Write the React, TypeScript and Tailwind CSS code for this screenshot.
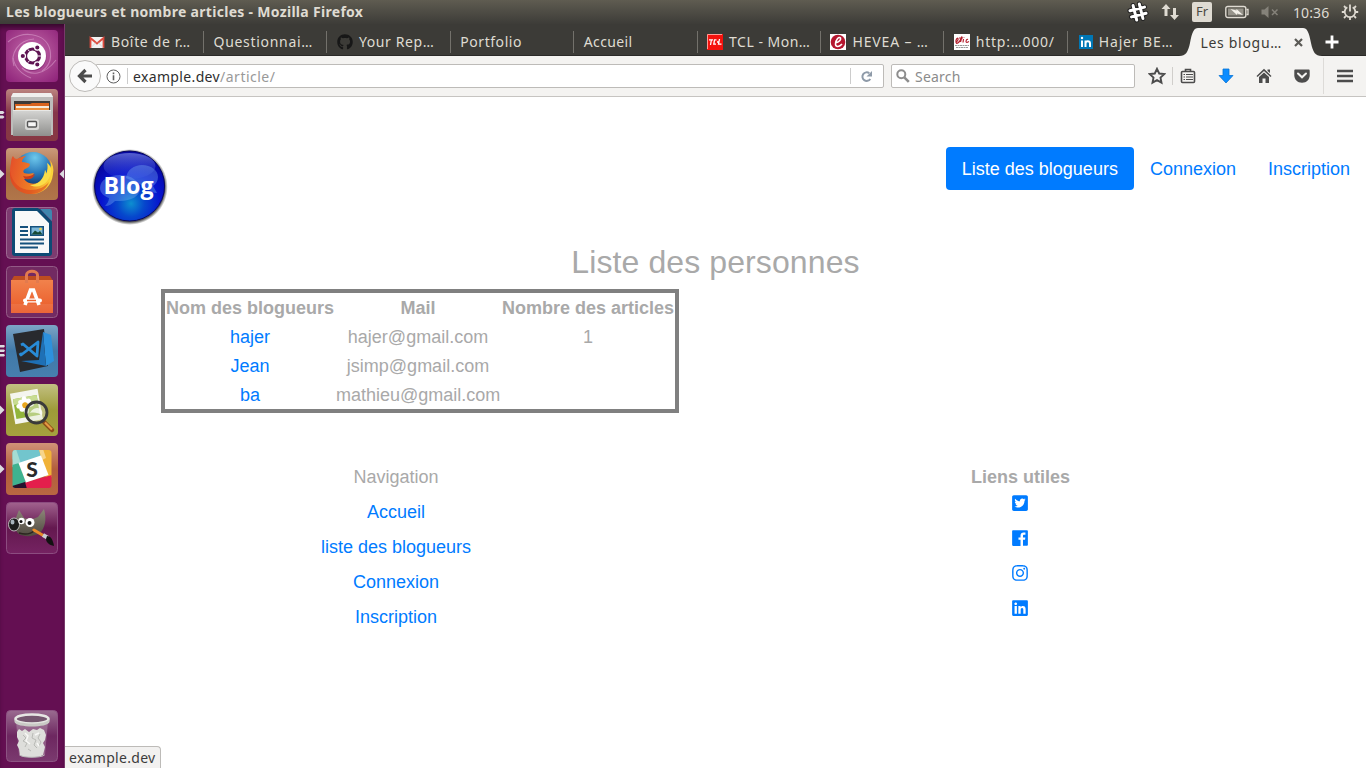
import React from "react";
import { FaTwitterSquare, FaInstagram, FaLinkedin, FaGithub } from "react-icons/fa";

const FacebookIcon = () => (
  <svg viewBox="0 0 448 512" className="h-[18px] w-[16px]" fill="currentColor">
    <path d="M448 56.7v398.5c0 13.7-11.1 24.7-24.7 24.7H309.1V306.5h58.2l8.7-67.6h-67v-43.2c0-19.6 5.4-32.9 33.5-32.9h35.8v-60.5c-6.2-.8-27.4-2.7-52.2-2.7-51.6 0-87 31.5-87 89.4v49.9h-58.4v67.6h58.4V480H24.7C11.1 480 0 468.9 0 455.3V56.7C0 43.1 11.1 32 24.7 32h398.5c13.7 0 24.8 11.1 24.8 24.7z" />
  </svg>
);

/* ---------- launcher artwork ---------- */

const UbuntuArt = () => (
  <>
    <defs>
      <radialGradient id="ub" cx=".5" cy=".45" r=".75">
        <stop offset="0" stopColor="#c56db0" />
        <stop offset=".55" stopColor="#a6438e" />
        <stop offset="1" stopColor="#8c1f78" />
      </radialGradient>
    </defs>
    <rect width="52" height="52" rx="4" fill="url(#ub)" />
    <g fill="none" stroke="#e3acd6" strokeWidth="1.1" opacity=".5">
      <path d="M2 12C14 0 40 2 44 20c2 10-2 17-8 21" />
      <path d="M8 36C4 24 12 10 28 9" />
      <path d="M16 38c8 8 22 8 34-8" />
      <path d="M7 28c2 10 8 16 18 20" />
    </g>
    <circle cx="26.500" cy="27" r="14" fill="#6d1660" opacity=".45" />
    <circle cx="26" cy="26" r="14" fill="#fff" />
    <circle cx="26.500" cy="26" r="7" fill="none" stroke="#5e1352" strokeWidth="3.200" />
    <g stroke="#fff" strokeWidth="1.2" fill="#5e1352">
      <circle cx="16.800" cy="26" r="2.700" />
      <circle cx="31.300" cy="17.500" r="2.700" />
      <circle cx="31.300" cy="34.500" r="2.700" />
    </g>
    <path d="M32 26h3M22 19.500l1.500 2M22 32.500l1.500-2" stroke="#fff" strokeWidth="1" />
  </>
);

const FilesArt = () => (
  <>
    <defs>
      <linearGradient id="fl" x2="0" y2="1">
        <stop offset="0" stopColor="#bc8580" />
        <stop offset=".45" stopColor="#86364a" />
        <stop offset="1" stopColor="#873843" />
      </linearGradient>
      <linearGradient id="fg" x2="0" y2="1">
        <stop offset="0" stopColor="#d5d5d3" />
        <stop offset="1" stopColor="#8f8f8d" />
      </linearGradient>
    </defs>
    <rect width="52" height="52" rx="4" fill="url(#fl)" />
    <path d="M7 4h38l2 4v38H5V8z" fill="#bdbdbb" />
    <path d="M7 4h38l2 4H5z" fill="#f0f0ee" />
    <path d="M8 12h36v10H8z" fill="#3d3a37" />
    <path d="M9 15h15l2-1h17v8H9z" fill="#d9631e" />
    <path d="M10 17h33v5H10z" fill="#f7ead9" />
    <path d="M10 19h33v3H10z" fill="#ec913f" />
    <path d="M7 21h38v26H7z" fill="url(#fg)" />
    <path d="M7 21.500h38" stroke="#e8e8e6" />
    <rect x="19" y="30" width="14" height="11" rx="2.500" fill="#d9d9d7" />
    <rect x="21.500" y="32.500" width="9" height="5.500" rx="1" fill="#f6f6f6" stroke="#555" strokeWidth="1.400" />
  </>
);

const FirefoxArt = () => (
  <>
    <defs>
      <linearGradient id="ffb" x2="0" y2="1">
        <stop offset="0" stopColor="#ca9a7b" />
        <stop offset=".5" stopColor="#a96941" />
        <stop offset="1" stopColor="#b0764a" />
      </linearGradient>
      <radialGradient id="ffg" cx=".55" cy=".15" r=".7">
        <stop offset="0" stopColor="#6ec8ec" />
        <stop offset=".6" stopColor="#2877b8" />
        <stop offset="1" stopColor="#154179" />
      </radialGradient>
      <linearGradient id="fff" x1="0" y1=".2" x2="1" y2=".4">
        <stop offset="0" stopColor="#e4502a" />
        <stop offset=".6" stopColor="#f08124" />
        <stop offset="1" stopColor="#fbd83a" />
      </linearGradient>
    </defs>
    <rect width="52" height="52" rx="4" fill="url(#ffb)" />
    <circle cx="27" cy="23" r="19" fill="url(#ffg)" />
    <path d="M5 15c0-3 1-6 2-7 1 2 2 3 4 3 3-2 6-3 9-3-3 2-4 4-4 6 3 0 6 1 8 2 0 2-2 4-5 5-2 1-2 3-1 4 3 1 6 1 10 0-2 4-6 6-10 6 4 6 13 6 18 1 4-4 6-9 6-15 1 2 2 3 2 5 1-3 1-7 0-10 3 4 4 9 3 14-1 12-10 20-21 20C13 46 4 38 4 26c0-4 0-7 1-11z" fill="url(#fff)" />
    <path d="M41 15c1 3 1 8-1 11 0-2 0-3-1-4-1 9-7 15-15 15 10 5 20-3 21-13 1-4-1-7-4-9z" fill="#fbdd48" />
    <path d="M4 23c2 12 10 19 21 19 7 0 14-3 18-8-3 8-10 12-18 12C13 46 4 38 4 26z" fill="#d9421f" opacity=".6" />
    <path d="M17 28c4 1 8 0 12-2-2 5-6 6-10 5z" fill="#c73d1d" />
  </>
);

const WriterArt = () => (
  <>
    <rect x=".5" y=".5" width="51" height="51" rx="4" fill="#7d3b70" stroke="#9d6891" />
    <path d="M6 4c0-2 1-3 3-3h23l14 14v31c0 2-1 3-3 3H9c-2 0-3-1-3-3z" fill="#0d4a74" />
    <path d="M9 4h22l12 12v30H9z" fill="#f8f9f9" />
    <path d="M34 2h10c1 0 2 1 2 3v9z" fill="#3f86ae" />
    <path d="M30 2l16 17v-4L34 2z" fill="#0d4a74" />
    <path d="M14 20h8M14 24h8M14 28h8M14 32.500h24M14 36.500h24M14 40.500h18" stroke="#15517c" strokeWidth="2" />
    <rect x="24" y="19" width="14" height="10" fill="#15517c" />
    <rect x="25.500" y="20.500" width="11" height="7" fill="#7db8d8" />
    <path d="M25.500 27.500l3.500-4 3 2 2-1.500 2.500 3.500z" fill="#174a35" />
    <circle cx="34.500" cy="22" r="1.300" fill="#f4d24a" />
  </>
);

const SoftwareArt = () => (
  <>
    <defs>
      <linearGradient id="sw" x2="0" y2="1">
        <stop offset="0" stopColor="#f1824c" />
        <stop offset="1" stopColor="#ea5a28" />
      </linearGradient>
    </defs>
    <rect x=".5" y=".5" width="51" height="51" rx="4" fill="#722a62" stroke="#935a86" />
    <path d="M5 15l3-5h36l3 5z" fill="#bd4c20" />
    <path d="M5 14h42v33H5z" fill="url(#sw)" />
    <path d="M20.500 17V9c0-5 11-5 11 0v8" fill="none" stroke="#e27a4e" strokeWidth="3" />
    <path d="M5 38h42v9H5z" fill="#fff" opacity=".08" />
    <path d="M19 39l5.500-15h3L33 39" fill="none" stroke="#fff" strokeWidth="3.600" />
    <path d="M19 34.500h15" stroke="#fff" strokeWidth="4" strokeLinecap="round" />
    <path d="M21 34.500h9" stroke="#ed6430" strokeWidth="1.500" />
  </>
);

const CodeArt = () => (
  <>
    <defs>
      <linearGradient id="vc" x2="0" y2="1">
        <stop offset="0" stopColor="#7da5c6" />
        <stop offset=".5" stopColor="#4079a8" />
        <stop offset="1" stopColor="#477fae" />
      </linearGradient>
    </defs>
    <rect width="52" height="52" rx="4" fill="url(#vc)" />
    <path d="M7 9l31-5 4 37-28 6z" fill="#282a2e" />
    <path d="M37 7l8 3 3 26-8 5z" fill="#2d91dd" />
    <path d="M37 7l3 34-25-5 18-1z" fill="#1e70b6" />
    <path d="M15 20l2-1 14 12 1-14-17 13-1-2" fill="none" stroke="#288bd7" strokeWidth="2.800" strokeLinejoin="round" />
  </>
);

const ViewerArt = () => (
  <>
    <defs>
      <linearGradient id="vw" x2="0" y2="1">
        <stop offset="0" stopColor="#c2c082" />
        <stop offset=".5" stopColor="#9e9b38" />
        <stop offset="1" stopColor="#a5a13e" />
      </linearGradient>
    </defs>
    <rect width="52" height="52" rx="4" fill="url(#vw)" />
    <g transform="rotate(-10 20 20)">
      <rect x="6" y="7" width="28" height="31" fill="#f4f5ee" />
      <rect x="8" y="13" width="24" height="20" fill="#92b53c" />
      <rect x="8" y="13" width="24" height="6" fill="#c8dc92" />
      <g fill="#fff">
        <ellipse cx="19" cy="16" rx="2.500" ry="4" />
        <ellipse cx="19" cy="26" rx="2.500" ry="4" />
        <ellipse cx="14" cy="21" rx="4" ry="2.500" />
        <ellipse cx="24" cy="21" rx="4" ry="2.500" />
        <ellipse cx="15.500" cy="17.500" rx="3" ry="2.500" />
        <ellipse cx="22.500" cy="17.500" rx="3" ry="2.500" />
        <ellipse cx="15.500" cy="24.500" rx="3" ry="2.500" />
      </g>
      <circle cx="19" cy="21" r="3" fill="#e9a71f" />
    </g>
    <path d="M38 38l8 8" stroke="#8c4c16" strokeWidth="4.500" strokeLinecap="round" />
    <path d="M39 38.500l7 7" stroke="#e59a45" strokeWidth="2.200" />
    <circle cx="30.500" cy="28.500" r="10.500" fill="#e5ead2" fillOpacity=".45" stroke="#3a3a3a" strokeWidth="2.800" />
    <path d="M24 29c2-4 5-5 8-5 4 1 5 4 4 7-3-2-8-3-12-2z" fill="#fff" opacity=".75" />
  </>
);

const SlackArt = () => (
  <>
    <defs>
      <linearGradient id="sl" x2="0" y2="1">
        <stop offset="0" stopColor="#d19278" />
        <stop offset=".5" stopColor="#b25e3c" />
        <stop offset="1" stopColor="#b96742" />
      </linearGradient>
      <clipPath id="slc">
        <rect x="6.500" y="7" width="39" height="38" rx="3" />
      </clipPath>
    </defs>
    <rect width="52" height="52" rx="4" fill="url(#sl)" />
    <g clipPath="url(#slc)">
      <path d="M6 6h30v8L12 22 6 16z" fill="#72c5cd" />
      <path d="M6 6h4l5 15-9 3z" fill="#a5ddd4" />
      <path d="M33 6h13v28l-6 2z" fill="#f0b238" />
      <path d="M33 6h4l3 9-4 2z" fill="#f7d58b" />
      <path d="M6 22l7-2 8 22-15 4z" fill="#3fb28f" />
      <path d="M17 40l29-8v14H17z" fill="#e41e4c" />
      <path d="M6 43l13-4 2 7H6z" fill="#28122d" />
      <path d="M12.500 20L35 12.500 42.500 32 20 39.500z" fill="#fff" />
    </g>
    <text x="26" y="34" textAnchor="middle" fontFamily="Lato, sans-serif" fontWeight="900" fontSize="21" fill="#2b2b2b">S</text>
  </>
);

const GimpArt = () => (
  <>
    <defs>
      <linearGradient id="gm" x2="0" y2="1">
        <stop offset="0" stopColor="#a1628e" />
        <stop offset=".5" stopColor="#64184f" />
        <stop offset="1" stopColor="#752362" />
      </linearGradient>
      <linearGradient id="gf" x2="0" y2="1">
        <stop offset="0" stopColor="#8d8678" />
        <stop offset="1" stopColor="#4f4a40" />
      </linearGradient>
    </defs>
    <rect x=".5" y=".5" width="51" height="51" rx="4" fill="url(#gm)" stroke="#8c4c80" />
    <path d="M9 18l4-10 5 8c5 2 10 1 14-1l6-8c3 10 1 19-4 24-7 4-16 4-21 1-4-3-5-9-4-14z" fill="url(#gf)" />
    <ellipse cx="8" cy="22.500" rx="5.500" ry="6.500" fill="#1c1c1c" stroke="#d8d8d8" strokeWidth=".8" />
    <ellipse cx="6.500" cy="20" rx="2" ry="2.500" fill="#a8b4bd" />
    <circle cx="15.500" cy="19" r="3.200" fill="#fff" />
    <circle cx="24" cy="20.500" r="4.500" fill="#fff" />
    <circle cx="15" cy="19.500" r="1.500" fill="#111" />
    <circle cx="23.500" cy="21" r="2" fill="#111" />
    <path d="M13 31c6 2 12 1 16-3" fill="none" stroke="#2a261f" strokeWidth="1.500" />
    <path d="M28 28l10 6" stroke="#e98b2a" strokeWidth="3" strokeLinecap="round" />
    <path d="M37 33l5 3" stroke="#c9ced2" strokeWidth="4" />
    <path d="M41 34c4 0 6 4 7 10-5-1-8-4-8-7z" fill="#121212" />
  </>
);

const TrashArt = () => (
  <>
    <defs>
      <linearGradient id="tr" x2="0" y2="1">
        <stop offset="0" stopColor="#9a6b90" />
        <stop offset=".5" stopColor="#6d2760" />
        <stop offset="1" stopColor="#7b3a6f" />
      </linearGradient>
    </defs>
    <rect x=".5" y=".5" width="51" height="51" rx="4" fill="url(#tr)" stroke="#8c5382" />
    <path d="M10 11l3 34c2 3 24 3 26 0l3-34z" fill="#d7c9d5" opacity=".3" />
    <path d="M11 22l2-3 3 2 3-2 4 3 4-3 4 1 3-2 4 2 2 5-1 5-2 3 2 4-2 8c-5 3-19 3-23 0l-1-6-2-4 2-4-2-4z" fill="#dededb" />
    <path d="M17 25l3 3-3 3 4 2-2 4M27 23l-1 5 4 2-2 5 3 3M34 24l-2 4 3 4-2 4M22 39l3 2" stroke="#b9bab6" strokeWidth="1" fill="none" />
    <path d="M19 23l3 3-2 5 4 3M29 25l4-2M31 33l2 3" stroke="#f8f8f6" strokeWidth="1.400" fill="none" />
    <ellipse cx="26" cy="9" rx="16.500" ry="4.500" fill="#75576f" stroke="#e6e6e3" strokeWidth="2.600" />
    <path d="M8.500 9v3c2 6 33 6 35 0V9c-2 6-33 6-35 0z" fill="#c9c9c5" />
    <path d="M13.500 45c3 3 22 3 25 0" stroke="#bbb" strokeWidth="1" fill="none" />
  </>
);

type Item = { art: () => React.JSX.Element; marks?: number; focused?: boolean };
const launcher: Item[] = [
  { art: UbuntuArt },
  { art: FilesArt, marks: 2 },
  { art: FirefoxArt, marks: 1, focused: true },
  { art: WriterArt },
  { art: SoftwareArt },
  { art: CodeArt, marks: 3 },
  { art: ViewerArt, marks: 1 },
  { art: SlackArt, marks: 1 },
  { art: GimpArt },
];

const Tile = ({ art: Art, marks = 0, focused }: Item) => (
  <div className="flex h-[52px] w-full items-center">
    <svg className="h-[12px] w-[6px] shrink-0" viewBox="0 0 6 12" fill="#dcdce0">
      {marks === 1 && <path d="M0 1.500v9L4.500 6z" />}
      {marks === 2 && <path d="M0 2h3l1.500 1.500L3 5H0zM0 6.500h3L4.500 8 3 9.500H0z" />}
      {marks === 3 && <path d="M0 0h4l1 1-1 1.500H0zM0 4.500h4l1 1L4 7H0zM0 9h4l1 1.200L4 11.500H0z" />}
    </svg>
    <svg className="h-[52px] w-[52px] shrink-0" viewBox="0 0 52 52"><Art /></svg>
    {focused && (
      <svg className="ml-[1px] h-[10px] w-[5px]" viewBox="0 0 5 10" fill="#dcdce0"><path d="M5 .5v9L.5 5z" /></svg>
    )}
  </div>
);

/* ---------- tab favicons ---------- */

const Gmail = () => (
  <svg className="h-4 w-[22px] shrink-0 pr-[6px]" viewBox="0 0 16 16">
    <rect x="1" y="3" width="14" height="11" rx="1" fill="#f2f2f2" />
    <path d="M1.500 14V4l6.500 5.500L14.500 4v10" fill="none" stroke="#dd4b3e" strokeWidth="1.800" />
    <path d="M2 13.500l5-5M14 13.500l-5-5" stroke="#ccc" strokeWidth=".7" />
  </svg>
);
const Tcl = () => (
  <svg className="h-4 w-[22px] shrink-0 pr-[6px]" viewBox="0 0 16 16">
    <rect width="16" height="16" fill="#f5120d" />
    <path d="M.5 15V.5H15" stroke="#ff9b95" fill="none" />
    <path d="M2 5.800h4M4.500 5.500L3.500 11M9.500 5.800H7.500L6.800 10.200h2.200M12.500 5L11.500 10.200h3M10 8h2" stroke="#fff" strokeWidth="1.300" fill="none" />
  </svg>
);
const Hevea = () => (
  <svg className="h-4 w-[22px] shrink-0 pr-[6px]" viewBox="0 0 16 16">
    <rect width="16" height="16" fill="#fff" />
    <circle cx="8" cy="8" r="7.300" fill="#b5162f" />
    <path d="M5 9c4-1 6-3 5.500-5C9 2 5.500 6 5.500 10c0 3.500 4 3 6.500 0" fill="none" stroke="#fff" strokeWidth="1.600" />
  </svg>
);
const Clic = () => (
  <svg className="h-4 w-[22px] shrink-0 pr-[6px]" viewBox="0 0 16 16">
    <rect width="16" height="16" fill="#fff" />
    <path d="M1.500 8.500c2-1 3-3 2.500-4s-2.500 1-2 3.500 2 1 3.500-.5L8 2.500 6.500 8M5 4h4M9.500 5L9 8.500M10 3v.5M14 5.500c-1.500-1-3 3-1 3l2-1" fill="none" stroke="#b3202e" strokeWidth="1.200" />
    <path d="M1 11.500h14M2 13.500h12" stroke="#999" strokeWidth="1" strokeDasharray="2 .5" />
  </svg>
);
const LinkedinFav = () => (
  <svg className="h-4 w-[21px] shrink-0 pr-[5px]" viewBox="0 0 16 16">
    <rect x="1" y="1" width="14" height="14" fill="#0077b5" />
    <path d="M4 6.500V13M7.500 6.500V13M7.500 9.500c0-3 4.500-3 4.500 0V13" stroke="#fff" strokeWidth="2" fill="none" />
    <circle cx="4" cy="4" r="1.200" fill="#fff" />
  </svg>
);
const Github = () => <FaGithub className="mr-[6px] h-4 w-4 shrink-0 text-[#171717]" />;

const tabs: { label: string; icon?: () => React.JSX.Element; ls: string }[] = [
  { label: "Boîte de r…", icon: Gmail, ls: "tracking-[0.65px]" },
  { label: "Questionnai…", ls: "tracking-[0.7px]" },
  { label: "Your Rep…", icon: Github, ls: "tracking-[0.6px]" },
  { label: "Portfolio", ls: "tracking-[0.55px]" },
  { label: "Accueil", ls: "tracking-[0.4px]" },
  { label: "TCL - Mon…", icon: Tcl, ls: "tracking-[0.5px]" },
  { label: "HEVEA – …", icon: Hevea, ls: "tracking-[0.85px]" },
  { label: "http:…000/", icon: Clic, ls: "tracking-[0.75px]" },
  { label: "Hajer BE…", icon: LinkedinFav, ls: "tracking-[0.85px]" },
];

const TitleBar = () => (
  <header className="flex h-6 shrink-0 items-center bg-linear-to-b from-[#5f5c51] to-[#3d3c38] pl-[6px] text-[#dfdbd2]">
    <h1 className="w-[1121px] whitespace-nowrap text-[14px] font-bold leading-6 tracking-[0.3px]">Les blogueurs et nombre articles - Mozilla Firefox</h1>
    <svg className="h-[22px] w-[22px] shrink-0" viewBox="0 0 22 22">
      <g transform="rotate(-14 11 11)">
        <path d="M7.800 3.500v15M14.200 3.500v15M3.500 7.800h15M3.500 14.200h15" stroke="#222" strokeWidth="5" strokeLinecap="round" />
        <path d="M7.800 3.500v15M14.200 3.500v15M3.500 7.800h15M3.500 14.200h15" stroke="#fff" strokeWidth="3" strokeLinecap="round" />
      </g>
    </svg>
    <svg className="ml-[12px] h-[18px] w-[19px] shrink-0" viewBox="0 0 19 18" fill="#dfdbd2">
      <path d="M5 1l4.500 5H6.500v7h-3V6H.5zM13.500 17L9 12h3V5h3v7h3z" />
    </svg>
    <div className="ml-[12px] flex h-5 w-5 shrink-0 items-center justify-center rounded-[2px] bg-[#dfdbd2] text-[13px] text-[#4a4842]">Fr</div>
    <svg className="ml-[13px] h-[14px] w-[24px] shrink-0" viewBox="0 0 24 14">
      <rect x=".8" y="1.500" width="20" height="11" rx="2" fill="none" stroke="#dfdbd2" strokeWidth="1.400" />
      <rect x="3" y="3.500" width="15.500" height="7" fill="#96938a" />
      <path d="M21.500 4.500H23v5h-1.500" fill="none" stroke="#dfdbd2" strokeWidth="1.300" />
      <path d="M5.500 4l6 1.500V4l6.500 6-6-1.500V10z" fill="#f2efe8" />
    </svg>
    <svg className="ml-[11px] h-4 w-5 shrink-0" viewBox="0 0 20 16">
      <path d="M1.500 5.500h3L8.500 2v12l-4-3.500h-3z" fill="#85827a" />
      <path d="M12 5.500l5.500 5.500M17.500 5.500L12 11" stroke="#85827a" strokeWidth="1.500" />
    </svg>
    <time className="ml-[13px] w-[37px] shrink-0 whitespace-nowrap text-[14px] tracking-[0.1px]">10:36</time>
    <svg className="ml-[11px] h-[18px] w-[18px] shrink-0" viewBox="0 0 18 18" fill="none" stroke="#dfdbd2">
      <path d="M6.300 4.300a5.300 5.300 0 1 0 5.400 0" strokeWidth="1.800" />
      <path d="M9 1.500v7" strokeWidth="1.800" />
      <path d="M3 3l1.800 1.800M13.200 4.800L15 3M.8 9h3M14.200 9h3M3 15l1.800-1.800M15 15l-1.800-1.800M9 14v3" strokeWidth="1.800" />
    </svg>
  </header>
);

const TabStrip = () => (
  <div className="flex h-8 shrink-0 items-center border-b border-[#2b2a28] bg-[#3c3b37] pl-[15px] pt-[4px] text-[14px] text-[#dfdbd2]">
    {tabs.map((t, i) => (
      <div key={t.label} className={`flex h-[22px] shrink-0 items-center whitespace-nowrap ${i === 0 ? "w-[124px] border-r border-[#73716b] pl-[9px]" : i === 8 ? "w-[115.7px] pl-[10px]" : "w-[123.4px] border-r border-[#73716b] pl-[9.5px]"}`}>
        {t.icon && <t.icon />}
        <span className={t.ls}>{t.label}</span>
      </div>
    ))}
    <div className="-mb-px -ml-[4px] flex h-[28px] shrink-0 items-end self-end">
      <svg className="h-[28px] w-[19px] shrink-0" viewBox="0 0 19 28"><path d="M0 28c7 0 9-4 11-13 2-11 4-15 8-15v28z" fill="#f4f3f1" /></svg>
      <div className="flex h-[28px] w-[105px] items-center bg-[#f4f3f1] pl-[2px] text-[#3c3b37]">
        <span className="w-[95px] whitespace-nowrap tracking-[0.7px]">Les blogu…</span>
        <svg className="h-[9px] w-[9px] shrink-0" viewBox="0 0 9 9"><path d="M1 1l7 7M8 1L1 8" stroke="#5b5a56" strokeWidth="2.200" /></svg>
      </div>
      <svg className="h-[28px] w-[19px] shrink-0" viewBox="0 0 19 28"><path d="M19 28C12 28 10 24 8 15 6 4 4 0 0 0v28z" fill="#f4f3f1" /></svg>
    </div>
    <svg className="ml-[3px] h-[14px] w-[14px] shrink-0" viewBox="0 0 14 14"><path d="M7 .5v13M.5 7h13" stroke="#fff" strokeWidth="2.800" /></svg>
  </div>
);

const Toolbar = () => (
  <div className="flex h-[41px] shrink-0 items-center border-b border-[#c6c4c1] bg-[#f4f3f1] pl-1">
    <div className="z-10 flex h-8 w-8 shrink-0 items-center justify-center rounded-full border border-[#bdbbb8] bg-[#fafafa]">
      <svg className="h-4 w-4" viewBox="0 0 16 16"><path d="M8.500 2L2.500 8l6 6M3 8h12" stroke="#4c4c4c" strokeWidth="3.200" fill="none" /></svg>
    </div>
    <div className="-ml-[5px] flex h-6 w-[788px] shrink-0 items-center rounded-r-[2px] border border-[#bdbbb8] bg-white pl-[9px]">
      <svg className="h-[15px] w-[15px] shrink-0" viewBox="0 0 15 15">
        <circle cx="7.500" cy="7.500" r="6.500" fill="none" stroke="#5f5f5f" />
        <path d="M7.500 6.300V11.300M7.500 3.500v1.700" stroke="#5f5f5f" strokeWidth="1.600" />
      </svg>
      <div className="ml-[6px] h-4 w-px bg-[#ccc]" />
      <span className="ml-[5px] w-[717px] whitespace-nowrap text-[14px] tracking-[0.35px] text-[#2e2e2e]">example.dev<span className="tracking-[0.5px] text-[#999]">/article/</span></span>
      <div className="h-4 w-px bg-[#ccc]" />
      <svg className="ml-[9px] h-[13px] w-[13px]" viewBox="0 0 13 13">
        <path d="M9.300 3.200A4.300 4.300 0 1 0 10.300 9" fill="none" stroke="#8e9aa8" strokeWidth="2" />
        <path d="M12 1v5.500H6.500z" fill="#8e9aa8" />
      </svg>
    </div>
    <div className="ml-[7px] flex h-6 w-[244px] shrink-0 items-center rounded-[2px] border border-[#bdbbb8] bg-white pl-1">
      <svg className="h-[14px] w-[14px]" viewBox="0 0 14 14"><circle cx="5.300" cy="5.300" r="4" fill="none" stroke="#8d8d8d" strokeWidth="2" /><path d="M8.300 8.300l4.500 4.500" stroke="#8d8d8d" strokeWidth="2.600" /></svg>
      <span className="ml-[5px] text-[14px] tracking-[0.2px] text-[#8b8b8b]">Search</span>
    </div>
    <svg className="ml-[13px] h-[18px] w-[18px] shrink-0" viewBox="0 0 18 18"><path d="M9 1.800l2.200 4.700 5.100.6-3.800 3.500 1 5.100L9 13.200l-4.500 2.500 1-5.100L1.700 7.100l5.100-.6z" fill="none" stroke="#4c4c4c" strokeWidth="1.900" /></svg>
    <div className="ml-[6px] h-[18px] w-px shrink-0 bg-[#d0cecb]" />
    <svg className="ml-[7px] h-4 w-4 shrink-0" viewBox="0 0 16 16" fill="none" stroke="#4c4c4c">
      <rect x="1.500" y="3.500" width="13" height="11" rx="1" strokeWidth="1.600" />
      <path d="M5.500 3.500V1.500h5v2" strokeWidth="1.600" />
      <path d="M3.500 6.500h1.500M3.500 9h1.500M3.500 11.500h1.500M6 6.500h7M6 9h7M6 11.500h7" strokeWidth="1" />
    </svg>
    <svg className="ml-[22px] h-4 w-4 shrink-0" viewBox="0 0 16 16"><path d="M5 1h6v6.500h4L8 15 1 7.500h4z" fill="#0b8cff" stroke="#0973d6" strokeWidth=".8" /></svg>
    <svg className="ml-[22px] h-4 w-4 shrink-0" viewBox="0 0 16 16" fill="#4c4c4c"><path d="M8 .8l7.500 7.200-1 1L8 3 1.500 9l-1-1zM11.500 1.500H14V5l-2.500-2zM3 9l5-4.500L13 9v6H9.500v-4.500h-3V15H3z" /></svg>
    <svg className="ml-[22px] h-4 w-4 shrink-0" viewBox="0 0 16 16"><path d="M1.500 1.500h13c.8 0 1.200.5 1.200 1.200v4.500c0 4-3 7.500-7.700 7.500S.3 11.200.3 7.200V2.700c0-.7.4-1.200 1.200-1.200z" fill="#4c4c4c" /><path d="M4 5.500l4 3.800 4-3.800" stroke="#f4f3f1" strokeWidth="2" fill="none" strokeLinecap="round" /></svg>
    <div className="ml-[13px] h-9 w-px shrink-0 bg-[#dddbd8]" />
    <svg className="ml-[13px] h-[14px] w-4 shrink-0" viewBox="0 0 16 14"><path d="M0 2h16M0 7h16M0 12h16" stroke="#4c4c4c" strokeWidth="2.600" strokeLinecap="square" /></svg>
  </div>
);

const Logo = () => (
  <svg className="h-[78px] w-[78px]" viewBox="0 0 78 78">
    <defs>
      <radialGradient id="lb" cx=".52" cy=".75" r=".68">
        <stop offset="0" stopColor="#0d8fd0" />
        <stop offset=".28" stopColor="#0648cc" />
        <stop offset=".62" stopColor="#0713cf" />
        <stop offset="1" stopColor="#0508a0" />
      </radialGradient>
      <linearGradient id="lg" x2="0" y2="1">
        <stop offset="0" stopColor="#8c9bf0" stopOpacity=".6" />
        <stop offset="1" stopColor="#3a50e0" stopOpacity=".12" />
      </linearGradient>
      <radialGradient id="ls">
        <stop offset=".92" stopColor="#222" stopOpacity=".75" />
        <stop offset="1" stopColor="#444" stopOpacity="0" />
      </radialGradient>
    </defs>
    <circle cx="38.800" cy="39" r="38" fill="url(#ls)" />
    <circle cx="38.600" cy="38" r="35" fill="url(#lb)" stroke="#060663" strokeWidth="1" />
    <ellipse cx="38.500" cy="18" rx="26" ry="13" fill="url(#lg)" />
    <path d="M35 30c1-8 8-13 16-13 9 0 16 5 16 12 0 4-2 7-5 9l4 7c-4 0-7-2-9-5z" fill="#7db4f5" opacity=".36" />
    <path d="M29 27c12 0 20 7 20 14s-9 12-20 12h-5c-3 3-6 5-10 5 2-2 4-5 4-8-5-2-9-5-9-10 0-8 9-13 20-13z" fill="#7db4f5" opacity=".36" />
    <text x="12.500" y="45.500" fontFamily="'Open Sans', sans-serif" fontWeight="700" fontSize="23" textLength="50" lengthAdjust="spacingAndGlyphs" fill="#fff">Blog</text>
  </svg>
);

const people = [
  { name: "hajer", mail: "hajer@gmail.com", count: "1" },
  { name: "Jean", mail: "jsimp@gmail.com", count: "" },
  { name: "ba", mail: "mathieu@gmail.com", count: "" },
];

const Page = () => (
  <main className="flex flex-1 flex-col bg-white font-['Liberation_Sans',sans-serif] text-[18px] leading-[27px] text-[#a9a9a9]">
    <div className="flex h-[139px] items-start justify-between pl-[26px] pt-[50px]">
      <div className="pt-[1px]"><Logo /></div>
      <nav className="flex text-[#007bff]">
        <a className="rounded-[4px] bg-[#007bff] px-4 pb-[7px] pt-[9px] text-white">Liste des blogueurs</a>
        <a className="px-4 pb-[7px] pt-[9px]">Connexion</a>
        <a className="px-4 pb-[7px] pt-[9px]">Inscription</a>
      </nav>
    </div>
    <h2 className="pt-[7px] text-center text-[32px] leading-[38px] tracking-[0.1px]">Liste des personnes</h2>
    <table className="ml-24 mt-2 w-[518px] table-fixed border-separate border-spacing-0 border-4 border-[#808080] text-center">
      <thead>
        <tr>
          <th className="w-[170px] whitespace-nowrap px-px pb-0 pt-[2px]">Nom des blogueurs</th>
          <th className="w-[166px] px-px pb-0 pt-[2px]">Mail</th>
          <th className="w-[174px] whitespace-nowrap px-px pb-0 pt-[2px]">Nombre des articles</th>
        </tr>
      </thead>
      <tbody>
        {people.map((p) => (
          <tr key={p.name}>
            <td className="px-px pb-0 pt-[2px] text-[#007bff]">{p.name}</td>
            <td className="px-px pb-0 pt-[2px]">{p.mail}</td>
            <td className="px-px pb-0 pt-[2px]">{p.count}</td>
          </tr>
        ))}
      </tbody>
    </table>
    <footer className="flex pl-[19px] pt-[51px] text-center">
      <div className="flex w-[624px] flex-col gap-2 text-[#007bff]">
        <p className="text-[#a9a9a9]">Navigation</p>
        <a>Accueil</a>
        <a>liste des blogueurs</a>
        <a>Connexion</a>
        <a>Inscription</a>
      </div>
      <div className="flex w-[624px] flex-col items-center text-[#007bff]">
        <p className="pl-px font-bold text-[#a9a9a9]">Liens utiles</p>
        <div className="flex flex-col gap-[17px] pt-[3px]">
          <FaTwitterSquare className="h-[18px] w-[16px]" />
          <FacebookIcon />
          <FaInstagram className="h-[18px] w-[16px]" />
          <FaLinkedin className="h-[18px] w-[16px]" />
        </div>
      </div>
    </footer>
  </main>
);

export default function App() {
  return (
    <div className="flex h-[768px] w-[1366px] flex-col overflow-hidden bg-white font-['Noto_Sans',sans-serif]">
      <TitleBar />
      <div className="flex min-h-0 flex-1">
        <aside className="flex w-[65px] shrink-0 flex-col justify-between border-r border-[#79396b] bg-[#640f52] pb-[6px] pt-[6px] shadow-[inset_0_5px_5px_-2px_#35082c]">
          <div className="flex flex-col gap-[7px]">
            {launcher.map((it, i) => <Tile key={i} {...it} />)}
          </div>
          <Tile art={TrashArt} />
        </aside>
        <section className="relative flex w-[1301px] flex-col">
          <TabStrip />
          <Toolbar />
          <Page />
          <div className="absolute bottom-0 left-0 flex h-[22px] w-[96px] items-center whitespace-nowrap rounded-tr-[4px] border-r border-t border-[#bdbbb8] bg-[#f2f1f0] pl-1 text-[14px] tracking-[0.3px] text-[#3c3c3c]">example.dev</div>
        </section>
      </div>
    </div>
  );
}
